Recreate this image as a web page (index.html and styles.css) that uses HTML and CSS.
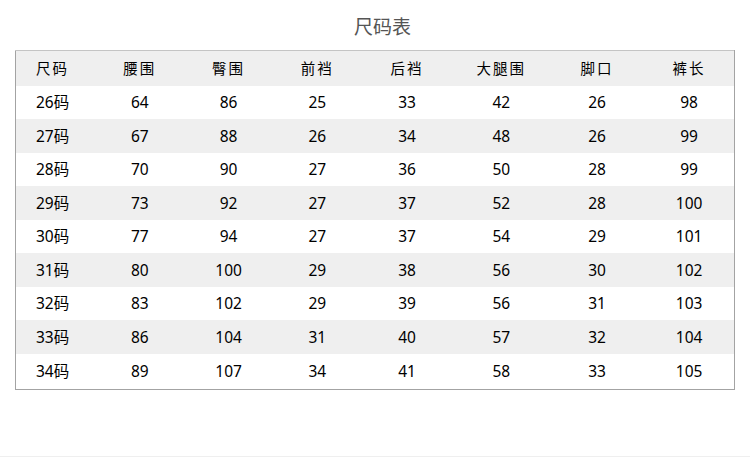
FILE: index.html
```html
<!DOCTYPE html>
<html lang="zh-CN">
<head>
<meta charset="utf-8">
<title>尺码表</title>
<link rel="stylesheet" href="styles.css">
</head>
<body>
<div class="page">
  <h1 class="title">尺码表</h1>
  <table class="size-table">
    <colgroup>
      <col class="c1"><col class="c2"><col class="c3"><col class="c4"><col class="c5"><col class="c6"><col class="c7"><col class="c8">
    </colgroup>
    <thead>
      <tr><th>尺码</th><th>腰围</th><th>臀围</th><th>前裆</th><th>后裆</th><th>大腿围</th><th>脚口</th><th>裤长</th></tr>
    </thead>
    <tbody>
      <tr><td>26码</td><td>64</td><td>86</td><td>25</td><td>33</td><td>42</td><td>26</td><td>98</td></tr>
      <tr><td>27码</td><td>67</td><td>88</td><td>26</td><td>34</td><td>48</td><td>26</td><td>99</td></tr>
      <tr><td>28码</td><td>70</td><td>90</td><td>27</td><td>36</td><td>50</td><td>28</td><td>99</td></tr>
      <tr><td>29码</td><td>73</td><td>92</td><td>27</td><td>37</td><td>52</td><td>28</td><td>100</td></tr>
      <tr><td>30码</td><td>77</td><td>94</td><td>27</td><td>37</td><td>54</td><td>29</td><td>101</td></tr>
      <tr><td>31码</td><td>80</td><td>100</td><td>29</td><td>38</td><td>56</td><td>30</td><td>102</td></tr>
      <tr><td>32码</td><td>83</td><td>102</td><td>29</td><td>39</td><td>56</td><td>31</td><td>103</td></tr>
      <tr><td>33码</td><td>86</td><td>104</td><td>31</td><td>40</td><td>57</td><td>32</td><td>104</td></tr>
      <tr><td>34码</td><td>89</td><td>107</td><td>34</td><td>41</td><td>58</td><td>33</td><td>105</td></tr>
    </tbody>
  </table>
</div>
<div class="footer-line"></div>
</body>
</html>
```

FILE: styles.css
```css
html, body {
  margin: 0;
  padding: 0;
  background: #ffffff;
}

body {
  font-family: "Noto Sans", "Noto Sans CJK SC", sans-serif;
  color: #000000;
  height: 457px;
  position: relative;
  overflow: hidden;
}

.page {
  padding-left: 15px;
}

.title {
  margin: 0;
  height: 50px;
  padding-top: 12px;
  box-sizing: border-box;
  font-size: 19px;
  font-weight: normal;
  line-height: 28px;
  color: #555555;
  text-align: center;
  width: 735px;
  font-family: "Noto Sans CJK SC", sans-serif;
}

.size-table {
  width: 720px;
  border-collapse: collapse;
  table-layout: fixed;
  border: 1px solid #a3a3a3;
  border-top-color: #c4c4c4;
  font-size: 15.5px;
}

.c1 { width: 80px; }
.c2 { width: 88px; }
.c3 { width: 89px; }
.c4 { width: 88px; }
.c5 { width: 91px; }
.c6 { width: 97px; }
.c7 { width: 94px; }
.c8 { width: 90px; }

.size-table th,
.size-table td {
  padding: 0;
  text-align: center;
  vertical-align: middle;
  line-height: 20px;
}

.size-table th {
  font-weight: normal;
  letter-spacing: 2px;
  font-family: "Noto Sans CJK SC", sans-serif;
  font-size: 14.5px;
}

.size-table th:first-child,
.size-table td:first-child {
  text-align: left;
  padding-left: 20px;
}

.size-table thead tr {
  height: 35px;
  background: #efefef;
}

.size-table tbody tr {
  height: 33px;
}

.size-table tbody tr:nth-child(even) {
  height: 34px;
  background: #efefef;
}

.size-table tbody tr:last-child {
  height: 36px;
}

.footer-line {
  position: absolute;
  left: 0;
  right: 0;
  top: 456px;
  height: 1px;
  background: #efefef;
}
```
